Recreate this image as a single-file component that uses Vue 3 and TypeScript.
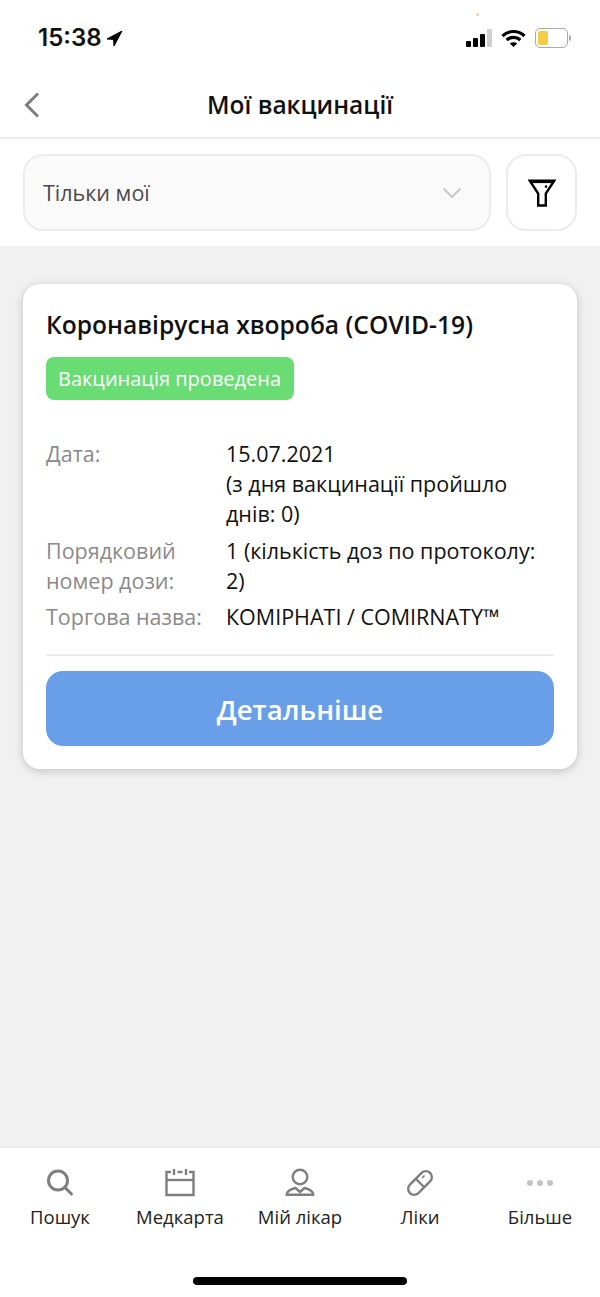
<template>
  <div class="screen">
    <div class="status-bar">
      <div class="status-time">
        <span>15:38</span>
        <svg width="17" height="17" viewBox="0 0 17 17"><path d="M16 1 L1 9 L7.6 9.4 L8 16 Z" fill="#000" stroke="#000" stroke-linejoin="round" /></svg>
      </div>
      <div class="status-icons">
        <span class="privacy-dot"></span>
        <div class="signal">
          <i class="b1"></i><i class="b2"></i><i class="b3"></i><i class="b4"></i>
        </div>
        <svg width="25" height="19" viewBox="0 0 25 19" fill="none" stroke="#000" stroke-width="3.2">
          <path d="M1.5 7 C7.5 1 17.5 1 23.5 7" />
          <path d="M5.6 11 C9.5 7.4 15.5 7.4 19.4 11" />
          <path d="M12.5 18 L8.8 14.4 C10.8 12.8 14.2 12.8 16.2 14.4 Z" fill="#000" stroke="none" />
        </svg>
        <div class="battery">
          <div class="battery-level"></div>
        </div>
        <div class="battery-tip"></div>
      </div>
    </div>

    <header class="nav">
      <button class="back" aria-label="Назад">
        <svg width="18" height="26" viewBox="0 0 18 26" fill="none" stroke="#7d7d7d" stroke-width="3">
          <path d="M15 1.5 L3.5 13 L15 24.5" />
        </svg>
      </button>
      <h1>Мої вакцинації</h1>
    </header>

    <div class="filters">
      <div class="select">
        <span>Тільки мої</span>
        <svg width="20" height="12" viewBox="0 0 20 12" fill="none" stroke="#c9c9c9" stroke-width="2">
          <path d="M1.5 1.5 L10 10 L18.5 1.5" />
        </svg>
      </div>
      <button class="filter-btn" aria-label="Фільтр">
        <svg width="28" height="28" viewBox="0 0 28 28" fill="none" stroke="#000" stroke-width="2.4" stroke-linejoin="miter">
          <path d="M1.8 1.7 H26.2 L17.8 14.5 V26.5 H10.2 V14.5 Z" />
          <path d="M4 3.4 H24" stroke-width="1.4" />
          <circle cx="18" cy="7.6" r="1.3" fill="#000" stroke="none" />
        </svg>
      </button>
    </div>

    <main class="content">
      <section class="card">
        <h2>Коронавірусна хвороба (COVID-19)</h2>
        <div class="badge">Вакцинація проведена</div>
        <dl class="rows">
          <template v-for="row in rows" :key="row.label">
            <dt>{{ row.label }}</dt>
            <dd>{{ row.value }}</dd>
          </template>
        </dl>
        <div class="divider"></div>
        <button class="more">Детальніше</button>
      </section>
    </main>

    <nav class="tabs">
      <div class="tab">
        <svg width="30" height="30" viewBox="0 0 30 30" fill="none" stroke="#7f7f7f" stroke-width="3">
          <circle cx="13" cy="12.5" r="9.5" />
          <path d="M20 19.5 L26.5 26" stroke-linecap="round" />
        </svg>
        <span>Пошук</span>
      </div>
      <div class="tab">
        <svg width="30" height="30" viewBox="0 0 30 30" fill="none" stroke="#7f7f7f" stroke-width="2.4">
          <path d="M6 4 H1.5 V27 H28.5 V4 H24" />
          <path d="M12.5 4 H17.5" />
          <path d="M1.5 12 H28.5" />
          <path d="M9 1 V7 M21 1 V7" />
        </svg>
        <span>Медкарта</span>
      </div>
      <div class="tab">
        <svg width="30" height="30" viewBox="0 0 30 30" fill="none" stroke="#7f7f7f" stroke-width="2.4">
          <circle cx="15" cy="9" r="7.3" />
          <path d="M10.5 20 C6 21 2 23 1.6 26.8 H28.4 C28 23 24 21 19.5 20 L15 24 Z" stroke-linejoin="round" />
        </svg>
        <span>Мій лікар</span>
      </div>
      <div class="tab">
        <svg width="30" height="30" viewBox="0 0 30 30" fill="none" stroke="#7f7f7f" stroke-width="2.4">
          <rect x="0.75" y="9" width="28.5" height="12" rx="6" transform="rotate(-45 15 15)" />
          <path d="M11 11 L19 19" />
          <path d="M17 10 L19.5 7.5" stroke-width="1.6" />
        </svg>
        <span>Ліки</span>
      </div>
      <div class="tab">
        <svg width="30" height="30" viewBox="0 0 30 30" fill="#c4c4c4">
          <circle cx="5" cy="15" r="3" />
          <circle cx="15" cy="15" r="3" />
          <circle cx="25" cy="15" r="3" />
        </svg>
        <span>Більше</span>
      </div>
    </nav>
    <div class="home-area">
      <div class="home-indicator"></div>
    </div>
  </div>
</template>

<script setup lang="ts">
interface Row {
  label: string
  value: string
}

const rows: Row[] = [
  { label: 'Дата:', value: '15.07.2021\n(з дня вакцинації пройшло днів: 0)' },
  { label: 'Порядковий номер дози:', value: '1 (кількість доз по протоколу: 2)' },
  { label: 'Торгова назва:', value: 'КОМІРНАТІ / COMIRNATY™' },
]
</script>

<style>
body {
  margin: 0;
  background: #fff;
}
</style>

<style scoped>
.screen {
  width: 600px;
  height: 1297px;
  display: flex;
  flex-direction: column;
  font-family: "Open Sans", "Noto Sans", sans-serif;
  background: #fff;
  overflow: hidden;
}

.status-bar {
  height: 74px;
  box-sizing: border-box;
  padding: 22px 29px 0 38px;
  display: flex;
  justify-content: space-between;
  align-items: flex-start;
}

.status-time {
  display: flex;
  align-items: center;
  gap: 4px;
  font-family: Inter, sans-serif;
  font-weight: 600;
  font-size: 24px;
  line-height: 32px;
  color: #111;
}

.status-icons {
  display: flex;
  align-items: center;
  height: 32px;
  position: relative;
}

.privacy-dot {
  position: absolute;
  left: 10px;
  top: -9px;
  width: 3px;
  height: 3px;
  border-radius: 50%;
  background: #f6c9a8;
}

.signal {
  display: flex;
  align-items: flex-end;
  gap: 2px;
  height: 18px;
  margin-right: 9px;
}

.signal i {
  display: block;
  width: 5px;
  border-radius: 1px;
  background: #000;
}

.signal .b1 { height: 6px; }
.signal .b2 { height: 9px; }
.signal .b3 { height: 13px; }
.signal .b4 { height: 18px; background: #cfcfcf; }

.battery {
  width: 27px;
  height: 14px;
  margin-left: 9px;
  padding: 2px;
  border: 1.5px solid #a9a9a9;
  border-radius: 5px;
  box-sizing: content-box;
}

.battery-level {
  width: 10px;
  height: 100%;
  background: #f5cd45;
  border-radius: 2px;
}

.battery-tip {
  width: 2px;
  height: 6px;
  margin-left: 1px;
  background: #a9a9a9;
  border-radius: 0 2px 2px 0;
}

.nav {
  height: 65px;
  box-sizing: border-box;
  border-bottom: 2px solid #ececec;
  display: flex;
  align-items: center;
  justify-content: center;
  position: relative;
}

.nav h1 {
  margin: 0;
  font-size: 24.5px;
  font-weight: 600;
  color: #111;
  position: relative;
  top: -1px;
}

.back {
  position: absolute;
  left: 23px;
  top: 18px;
  padding: 0;
  border: none;
  background: none;
  display: flex;
}

.filters {
  height: 107px;
  box-sizing: border-box;
  padding: 15px 23px;
  display: flex;
  gap: 15px;
}

.select {
  flex: 1;
  height: 77px;
  box-sizing: border-box;
  border: 2px solid #ececec;
  border-radius: 20px;
  background: #fafafa;
  padding: 0 27px 0 18px;
  display: flex;
  align-items: center;
  justify-content: space-between;
  font-size: 21.5px;
  color: #4a4a4a;
}

.filter-btn {
  width: 71px;
  height: 77px;
  box-sizing: border-box;
  border: 2px solid #ececec;
  border-radius: 20px;
  background: #fff;
  padding: 0;
  display: flex;
  align-items: center;
  justify-content: center;
}

.content {
  flex: 1;
  background: #f1f1f1;
  padding: 38px 23px 0;
}

.card {
  background: #fff;
  border-radius: 17px;
  box-shadow: 0 2px 10px rgba(0, 0, 0, 0.2);
  padding: 23px 23px 23px;
  height: 485px;
  box-sizing: border-box;
}

.card h2 {
  margin: 0;
  font-size: 24.6px;
  line-height: 36px;
  font-weight: 600;
  color: #111;
}

.badge {
  display: inline-block;
  margin-top: 14px;
  height: 43px;
  line-height: 43px;
  padding: 0 13px 0 12px;
  border-radius: 8px;
  background: #69dc74;
  color: #fff;
  font-size: 20px;
}

.rows {
  margin: 39px 0 0;
  display: grid;
  grid-template-columns: 180px 1fr;
  row-gap: 6.5px;
  font-size: 21.5px;
  line-height: 30px;
}

.rows dt {
  color: #8a8a8a;
}

.rows dd {
  margin: 0;
  color: #111;
  white-space: pre-line;
}

.divider {
  height: 2px;
  background: #ececec;
  margin-top: 22px;
}

.more {
  display: block;
  width: 100%;
  height: 75px;
  margin-top: 15px;
  border: none;
  border-radius: 17px;
  background: #699ee8;
  color: #fff;
  font-family: inherit;
  font-size: 27.6px;
  font-weight: 600;
}

.tabs {
  height: 102px;
  box-sizing: border-box;
  border-top: 2px solid #ececec;
  padding-top: 20px;
  display: grid;
  grid-template-columns: repeat(5, 1fr);
}

.tab {
  display: flex;
  flex-direction: column;
  align-items: center;
  gap: 6px;
  font-size: 18.5px;
  line-height: 26px;
  color: #222;
}

.home-area {
  height: 49px;
  box-sizing: border-box;
  padding-top: 29px;
  display: flex;
  justify-content: center;
}

.home-indicator {
  width: 214px;
  height: 8px;
  border-radius: 4px;
  background: #000;
}
</style>
